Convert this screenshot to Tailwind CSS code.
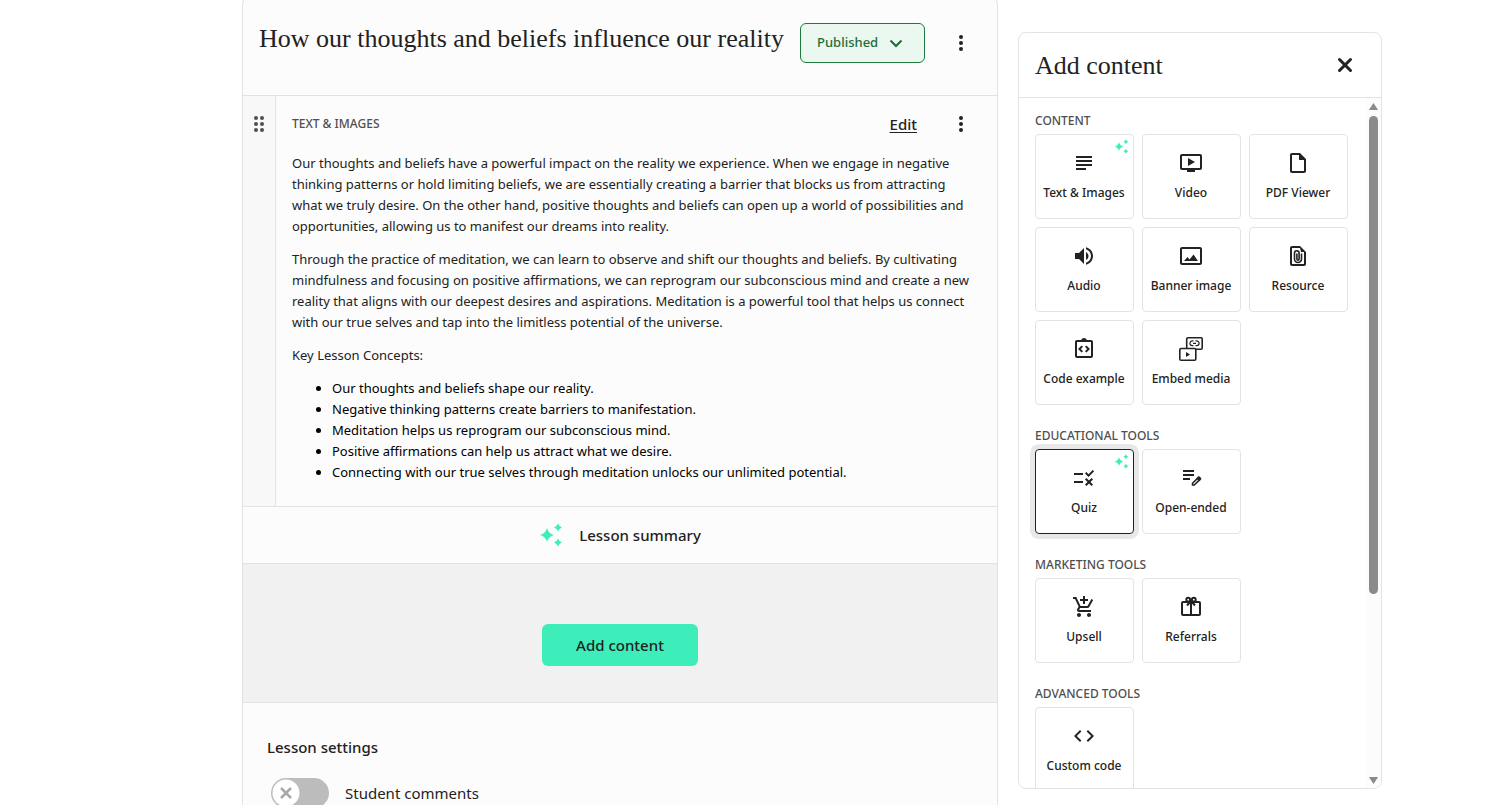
<!DOCTYPE html>
<html lang="en">
<head>
    <meta charset="UTF-8">
    <meta name="viewport" content="width=device-width, initial-scale=1.0">
    <title>Edit lesson</title>
    <script src="https://cdn.jsdelivr.net/npm/@tailwindcss/browser@4"></script>
</head>
<body class="h-screen overflow-hidden bg-white pl-28 font-['Noto_Sans',sans-serif] text-[#222]">
    <!-- Shared icons -->
    <svg class="hidden">
        <symbol id="sparkles" viewBox="0 0 24 24">
            <path d="M8 5Q9.500 10.500 15 12 9.500 13.500 8 19 6.500 13.500 1 12 6.500 10.500 8 5zM19 .5Q20 3.500 23 4.500 20 5.500 19 8.500 18 5.500 15 4.500 18 3.500 19 .5zM19 15.500Q20 18.500 23 19.500 20 20.500 19 23.500 18 20.500 15 19.500 18 18.500 19 15.500z"/>
        </symbol>
        <symbol id="kebab" viewBox="0 0 24 24">
            <circle cx="12" cy="6" r="2"/><circle cx="12" cy="12" r="2"/><circle cx="12" cy="18" r="2"/>
        </symbol>
    </svg>

    <div class="mx-auto flex max-w-[1140px] items-start gap-5">
        <!-- Lesson -->
        <main class="-mt-1 min-w-0 flex-1 rounded-t-lg border border-[#e3e3e3] bg-[#fcfcfc]">
            <header class="flex items-start justify-between border-b border-[#e3e3e3] pt-[26px] pr-6 pb-8 pl-4">
                <h1 class="font-['Liberation_Serif',serif] text-[26px] leading-8">How our thoughts and beliefs influence our reality</h1>
                <div class="flex items-center gap-6">
                    <button type="button" class="flex h-10 w-[125px] items-center gap-2.5 rounded-md border border-[#1f7a3d] bg-[#eaf8ef] pl-4 text-[13px] font-medium text-[#1f6b3a]">
                        Published
                        <svg class="size-4" viewBox="0 0 16 16" fill="none" stroke="currentColor" stroke-width="2"><path d="M2.500 5.500L8 11l5.500-5.500"/></svg>
                    </button>
                    <button type="button" aria-label="Lesson options"><svg class="size-6 fill-current"><use href="#kebab"/></svg></button>
                </div>
            </header>

            <section class="flex border-b border-[#e3e3e3]">
                <div class="w-[33px] shrink-0 border-r border-[#e3e3e3] bg-[#f8f8f8] pt-4">
                    <svg class="mx-auto size-6 fill-[#4f4f4f]" viewBox="0 0 24 24">
                        <circle cx="9" cy="6" r="2"/><circle cx="15" cy="6" r="2"/><circle cx="9" cy="12" r="2"/><circle cx="15" cy="12" r="2"/><circle cx="9" cy="18" r="2"/><circle cx="15" cy="18" r="2"/>
                    </svg>
                </div>
                <div class="min-w-0 flex-1 pt-4 pb-[23px] pl-4">
                    <div class="flex items-center pr-6">
                        <h2 class="flex-1 text-xs font-medium text-[#4f4f4f]">TEXT &amp; IMAGES</h2>
                        <a href="#" class="mr-8 text-[15px] font-medium underline underline-offset-2">Edit</a>
                        <button type="button" aria-label="Block options"><svg class="size-6 fill-current"><use href="#kebab"/></svg></button>
                    </div>
                    <div class="mt-[17px] space-y-3 pr-6 text-[13px] leading-[21px]">
                        <p>Our thoughts and beliefs have a powerful impact on the reality we experience. When we engage in negative thinking patterns or hold limiting beliefs, we are essentially creating a barrier that blocks us from attracting what we truly desire. On the other hand, positive thoughts and beliefs can open up a world of possibilities and opportunities, allowing us to manifest our dreams into reality.</p>
                        <p>Through the practice of meditation, we can learn to observe and shift our thoughts and beliefs. By cultivating mindfulness and focusing on positive affirmations, we can reprogram our subconscious mind and create a new reality that aligns with our deepest desires and aspirations. Meditation is a powerful tool that helps us connect with our true selves and tap into the limitless potential of the universe.</p>
                        <p>Key Lesson Concepts:</p>
                        <ul class="list-disc pl-10 text-black">
                            <li>Our thoughts and beliefs shape our reality.</li>
                            <li>Negative thinking patterns create barriers to manifestation.</li>
                            <li>Meditation helps us reprogram our subconscious mind.</li>
                            <li>Positive affirmations can help us attract what we desire.</li>
                            <li>Connecting with our true selves through meditation unlocks our unlimited potential.</li>
                        </ul>
                    </div>
                </div>
            </section>

            <button type="button" class="flex h-[57px] w-full items-center justify-center gap-4 border-b border-[#e3e3e3] text-[15px] font-medium">
                <svg class="size-6 fill-[#3deebb]"><use href="#sparkles"/></svg>
                Lesson summary
            </button>

            <div class="flex justify-center border-b border-[#e3e3e3] bg-[#f1f1f1] pt-[60px] pb-9">
                <button type="button" class="h-[42px] w-[156px] rounded-md bg-[#3deebb] text-[15px] font-medium">Add content</button>
            </div>

            <section class="px-6 py-8">
                <h2 class="text-[15px] leading-6 font-medium">Lesson settings</h2>
                <label class="mt-[19px] flex items-center gap-4 pl-1 text-[15px]">
                    <span class="relative flex h-[30px] w-[58px]">
                        <input type="checkbox" class="size-full appearance-none rounded-full bg-[#bcbcbc]">
                        <svg class="pointer-events-none absolute top-px left-px size-7" viewBox="0 0 28 28"><circle cx="14" cy="14" r="13.500" fill="#fff"/><path d="M9 9l10 10M19 9L9 19" stroke="#a8a8a8" stroke-width="2.500"/></svg>
                    </span>
                    Student comments
                </label>
            </section>
        </main>

        <!-- Add content panel -->
        <aside class="mt-8 flex h-[calc(100vh-48px)] w-[364px] shrink-0 flex-col overflow-hidden rounded-lg border border-[#e3e3e3]">
            <header class="flex h-[65px] shrink-0 items-center justify-between border-b border-[#e3e3e3] pr-6 pl-4">
                <h2 class="font-['Liberation_Serif',serif] text-[26px]">Add content</h2>
                <button type="button" aria-label="Close"><svg class="size-6" viewBox="0 0 24 24" fill="none" stroke="currentColor" stroke-width="3" stroke-linecap="round"><path d="M6.500 6.500l11 11M17.500 6.500l-11 11"/></svg></button>
            </header>
            <div class="flex min-h-0 flex-1">
                <div class="flex-1 space-y-[21px] overflow-hidden pt-[13px] pl-4">
                    <section>
                        <h3 class="mb-[3px] text-xs leading-5 font-medium text-[#4f4f4f]">CONTENT</h3>
                        <div class="grid auto-rows-[85px] grid-cols-[repeat(3,99px)] gap-2">
                            <button type="button" class="relative flex flex-col items-center gap-2 rounded border border-[#e3e3e3] pt-4 pr-px text-xs leading-5 font-medium">
                                <svg class="absolute top-1 right-1 size-[15px] fill-[#3deebb]"><use href="#sparkles"/></svg>
                                <svg class="size-6 fill-current" viewBox="0 0 24 24"><path d="M14 17H4v2h10v-2zm6-8H4v2h16V9zM4 15h16v-2H4v2zM4 5v2h16V5H4z"/></svg>
                                Text &amp; Images
                            </button>
                            <button type="button" class="flex flex-col items-center gap-2 rounded border border-[#e3e3e3] pt-4 pr-px text-xs leading-5 font-medium">
                                <svg class="size-6 fill-current" viewBox="0 0 24 24"><path d="M9 7v8l7-4zm12-4H3c-1.110 0-2 .89-2 2v12c0 1.100.89 2 2 2h5v2h8v-2h5c1.100 0 2-.9 2-2V5c0-1.100-.9-2-2-2zm0 14H3V5h18v12z"/></svg>
                                Video
                            </button>
                            <button type="button" class="flex flex-col items-center gap-2 rounded border border-[#e3e3e3] pt-4 pr-px text-xs leading-5 font-medium">
                                <svg class="size-6 fill-current" viewBox="0 0 24 24"><path d="M14 2H6c-1.100 0-2 .9-2 2v16c0 1.100.9 2 2 2h12c1.100 0 2-.9 2-2V8l-6-6zM6 20V4h7v5h5v11H6z"/></svg>
                                PDF Viewer
                            </button>
                            <button type="button" class="flex flex-col items-center gap-2 rounded border border-[#e3e3e3] pt-4 pr-px text-xs leading-5 font-medium">
                                <svg class="size-6 fill-current" viewBox="0 0 24 24"><path d="M3 9v6h4l5 5V4L7 9H3zm13.500 3c0-1.770-1.020-3.290-2.500-4.030v8.050c1.480-.73 2.500-2.250 2.500-4.020zM14 3.230v2.060c2.890.86 5 3.540 5 6.710s-2.110 5.850-5 6.710v2.060c4.010-.91 7-4.490 7-8.770s-2.990-7.860-7-8.770z"/></svg>
                                Audio
                            </button>
                            <button type="button" class="flex flex-col items-center gap-2 rounded border border-[#e3e3e3] pt-4 pr-px text-xs leading-5 font-medium">
                                <svg class="size-6 fill-current" viewBox="0 0 24 24"><path d="M21 3H3c-1.100 0-2 .9-2 2v14c0 1.100.9 2 2 2h18c1.100 0 2-.9 2-2V5c0-1.100-.9-2-2-2zm0 16H3V5h18v14z"/><path d="M5 17l3.500-4 2 2.400L14.500 10.500 19 17z"/></svg>
                                Banner image
                            </button>
                            <button type="button" class="flex flex-col items-center gap-2 rounded border border-[#e3e3e3] pt-4 pr-px text-xs leading-5 font-medium">
                                <svg class="size-6 fill-current" viewBox="0 0 24 24"><path d="M14 2H6c-1.100 0-2 .9-2 2v16c0 1.100.9 2 2 2h12c1.100 0 2-.9 2-2V8l-6-6zM6 20V4h8l1 4h3v12H6z"/><path d="M15.500 9.500V15a3.500 3.500 0 0 1-7 0V9a2.300 2.300 0 0 1 4.600 0v6a1.100 1.100 0 0 1-2.200 0V9.500" fill="none" stroke="currentColor" stroke-width="1.600"/></svg>
                                Resource
                            </button>
                            <button type="button" class="flex flex-col items-center gap-2 rounded border border-[#e3e3e3] pt-4 pr-px text-xs leading-5 font-medium">
                                <svg class="size-6 fill-current" viewBox="0 0 24 24"><path d="M19 3h-4.180C14.400 1.840 13.300 1 12 1s-2.400.84-2.820 2H5c-1.100 0-2 .9-2 2v14c0 1.100.9 2 2 2h14c1.100 0 2-.9 2-2V5c0-1.100-.9-2-2-2zm0 16H5V5h14v14z"/><path d="M11 14.170L8.830 12 11 9.830 9.590 8.410 6 12l3.590 3.590zM14.410 15.590L18 12l-3.590-3.590L13 9.830 15.170 12 13 14.170z"/></svg>
                                Code example
                            </button>
                            <button type="button" class="flex flex-col items-center gap-2 rounded border border-[#e3e3e3] pt-4 pr-px text-xs leading-5 font-medium">
                                <svg class="size-6" viewBox="0 0 24 24" fill="none" stroke="currentColor" stroke-width="1.600"><path d="M7.700 11V2c0-.7.5-1.200 1.300-1.200h13c.7 0 1.200.5 1.200 1.200v9c0 .8-.5 1.300-1.200 1.300h-5"/><rect x=".8" y="11.500" width="16" height="11.700" rx="1.300"/><path d="M14.500 3.900h-1.200a2.400 2.400 0 0 0 0 4.800h1.200M16.500 3.900h1.200a2.400 2.400 0 0 1 0 4.800h-1.200M14 6.300h3" stroke-width="1.200"/><path d="M7 15v5l4-2.500z" fill="currentColor" stroke="none"/></svg>
                                Embed media
                            </button>
                        </div>
                    </section>

                    <section>
                        <h3 class="mb-[3px] text-xs leading-5 font-medium text-[#4f4f4f]">EDUCATIONAL TOOLS</h3>
                        <div class="grid auto-rows-[85px] grid-cols-[repeat(3,99px)] gap-2">
                            <button type="button" class="relative flex flex-col items-center gap-2 rounded border border-[#222] pt-4 pr-px text-xs leading-5 font-medium ring-5 ring-[#e8e8e8]">
                                <svg class="absolute top-1 right-1 size-[15px] fill-[#3deebb]"><use href="#sparkles"/></svg>
                                <svg class="size-6 fill-current" viewBox="0 0 24 24"><path d="M16.540 11L13 7.460l1.410-1.410 2.120 2.120 4.240-4.240 1.410 1.410L16.540 11zM11 7H2v2h9V7zm10 6.410L19.590 12 17 14.590 14.410 12 13 13.410 15.590 16 13 18.590 14.410 20 17 17.410 19.590 20 21 18.590 18.410 16 21 13.410zM11 15H2v2h9v-2z"/></svg>
                                Quiz
                            </button>
                            <button type="button" class="flex flex-col items-center gap-2 rounded border border-[#e3e3e3] pt-4 pr-px text-xs leading-5 font-medium">
                                <svg class="size-6 fill-current" viewBox="0 0 24 24"><path d="M4 4h11v2H4zM4 8h11v2H4zM4 12h7v2H4z"/><path d="M13.500 17.300l5.200-5.200 1.800 1.800-5.200 5.200h-1.800z" fill="none" stroke="currentColor" stroke-width="1.500"/><path d="M17.300 12.300l1.800-1.800c.4-.4 1-.4 1.400 0l1.600 1.600c.4.4.4 1 0 1.400l-1.800 1.800z"/></svg>
                                Open-ended
                            </button>
                        </div>
                    </section>

                    <section>
                        <h3 class="mb-[3px] text-xs leading-5 font-medium text-[#4f4f4f]">MARKETING TOOLS</h3>
                        <div class="grid auto-rows-[85px] grid-cols-[repeat(3,99px)] gap-2">
                            <button type="button" class="flex flex-col items-center gap-2 rounded border border-[#e3e3e3] pt-4 pr-px text-xs leading-5 font-medium">
                                <svg class="size-6 fill-current" viewBox="0 0 24 24"><path d="M11 9h2V6h3V4h-3V1h-2v3H8v2h3v3zm-4 9c-1.100 0-2 .9-2 2s.9 2 2 2 2-.9 2-2-.9-2-2-2zm10 0c-1.100 0-2 .9-2 2s.9 2 2 2 2-.9 2-2-.9-2-2-2zm-9.830-3.250l.03-.12.9-1.630h7.450c.75 0 1.410-.41 1.750-1.030l3.860-7.010L19.420 4h-.01l-1.100 2-2.760 5H8.530l-.13-.27L6.160 6l-.95-2-.94-2H1v2h2l3.600 7.590-1.350 2.450C5.090 14.320 5 14.650 5 15c0 1.100.9 2 2 2h12v-2H7.420c-.13 0-.25-.11-.25-.25z"/></svg>
                                Upsell
                            </button>
                            <button type="button" class="flex flex-col items-center gap-2 rounded border border-[#e3e3e3] pt-4 pr-px text-xs leading-5 font-medium">
                                <svg class="size-6" viewBox="0 0 24 24" fill="none" stroke="currentColor" stroke-width="2"><rect x="3" y="7" width="18" height="13" rx="1"/><path d="M12 6v14"/><path d="M12 6l-4 4.500M12 6l4 4.500"/><circle cx="9.200" cy="4.700" r="1.900"/><circle cx="14.800" cy="4.700" r="1.900"/></svg>
                                Referrals
                            </button>
                        </div>
                    </section>

                    <section>
                        <h3 class="mb-[3px] text-xs leading-5 font-medium text-[#4f4f4f]">ADVANCED TOOLS</h3>
                        <div class="grid auto-rows-[85px] grid-cols-[repeat(3,99px)] gap-2">
                            <button type="button" class="flex flex-col items-center gap-2 rounded border border-[#e3e3e3] pt-4 pr-px text-xs leading-5 font-medium">
                                <svg class="size-6 fill-current" viewBox="0 0 24 24"><path d="M9.400 16.600L4.800 12l4.600-4.600L8 6l-6 6 6 6 1.400-1.400zm5.200 0l4.600-4.600-4.600-4.600L16 6l6 6-6 6-1.400-1.400z"/></svg>
                                Custom code
                            </button>
                        </div>
                    </section>
                </div>

                <!-- Scrollbar -->
                <div class="flex w-[15px] shrink-0 flex-col items-center gap-1 bg-[#fcfcfc] pt-1 pb-[3px] fill-[#8b8b8b]" aria-hidden="true">
                    <svg class="h-[10px] w-[9px] shrink-0" viewBox="0 0 9 10"><path d="M4.500 1L8.800 7.500c.2.300 0 .5-.3.500H.5c-.3 0-.5-.2-.3-.5z"/></svg>
                    <div class="w-full flex-1">
                        <div class="mx-auto h-[73%] w-[9px] rounded-full bg-[#8b8b8b]"></div>
                    </div>
                    <svg class="h-[10px] w-[9px] shrink-0" viewBox="0 0 9 10"><path d="M4.500 9L8.800 2.500c.2-.3 0-.5-.3-.5H.5c-.3 0-.5.200-.3.500z"/></svg>
                </div>
            </div>
        </aside>
    </div>
</body>
</html>
